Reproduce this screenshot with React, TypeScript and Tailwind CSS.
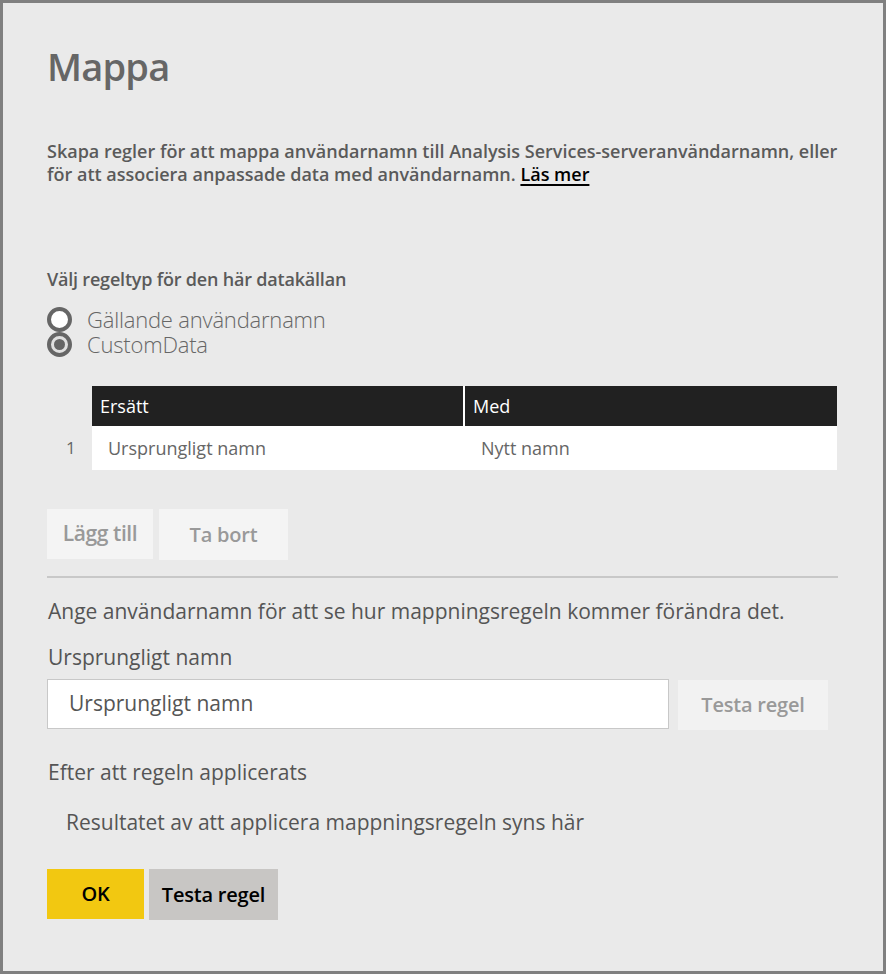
import React from "react";

const font = { fontFamily: '"Open Sans", "Noto Sans", Arial, sans-serif' };

export default function App() {
  return (
    <div
      className="w-[886px] h-[974px] border-[3px] border-[#808080] bg-[#eaeaea] box-border pl-[44px] pr-[45px] pt-[39px] text-[#666]"
      style={font}
    >
      <h1 className="text-[38px] leading-[48px] font-semibold text-[#666] tracking-[-0.8px]">Mappa</h1>

      <p className="mt-[50px] text-[18px] leading-[23px] font-semibold text-[#5a5a5a] -mr-[4px]">
        Skapa regler för att mappa användarnamn till Analysis Services-serveranvändarnamn, eller för att associera anpassade data med användarnamn.{" "}
        <span className="text-black underline underline-offset-[3px] decoration-[2px]">Läs mer</span>
      </p>

      <div className="mt-[81px] text-[18px] leading-[24px] font-semibold text-[#5a5a5a] tracking-[-0.2px]">
        Välj regeltyp för den här datakällan
      </div>

      <div className="mt-[16px] flex flex-col">
        <div className="flex items-center h-[25px]">
          <span className="w-[25px] h-[25px] rounded-full border-[4px] border-[#666] bg-white box-border shrink-0" />
          <span className="ml-[15px] text-[22px] leading-[25px] font-light text-[#666] tracking-[-0.2px]">Gällande användarnamn</span>
        </div>
        <div className="flex items-center h-[25px]">
          <span className="w-[25px] h-[25px] rounded-full border-[4px] border-[#666] bg-[#e0e0e0] box-border shrink-0 flex items-center justify-center">
            <span className="w-[11px] h-[11px] rounded-full bg-[#666]" />
          </span>
          <span className="ml-[15px] text-[22px] leading-[25px] font-light text-[#666] tracking-[-0.2px]">CustomData</span>
        </div>
      </div>

      <div className="mt-[29px] flex flex-col">
        <div className="flex h-[40px]">
          <div className="w-[45px]" />
          <div className="w-[371px] bg-[#212121] text-white text-[18px] flex items-center pl-[8px]">Ersätt</div>
          <div className="w-[2px] bg-white" />
          <div className="w-[372px] bg-[#212121] text-white text-[18px] flex items-center pl-[8px]">Med</div>
        </div>
        <div className="flex h-[44px]">
          <div className="w-[45px] flex items-center pl-[19px] text-[17px] text-[#666]">1</div>
          <div className="w-[745px] bg-white flex items-center text-[18px] text-[#666]">
            <span className="w-[373px] pl-[16px]">Ursprungligt namn</span>
            <span className="pl-[16px]">Nytt namn</span>
          </div>
        </div>
      </div>

      <div className="mt-[39px] flex gap-[6px] items-start">
        <button className="w-[106px] h-[50px] bg-[#f4f4f4] text-[#999] text-[21px] font-semibold tracking-[-0.4px]">Lägg till</button>
        <button className="w-[129px] h-[51px] bg-[#f4f4f4] text-[#999] text-[20px] font-semibold tracking-[-0.2px]">Ta bort</button>
      </div>

      <div className="mt-[16px] h-[2px] w-[791px] bg-[#c8c8c8]" />

      <div className="mt-[20px] text-[21px] leading-[26px] text-[#555] pl-[1px]">
        Ange användarnamn för att se hur mappningsregeln kommer förändra det.
      </div>
      <div className="mt-[20px] text-[21px] leading-[26px] text-[#555] pl-[1px]">
        Ursprungligt namn
      </div>

      <div className="mt-[9px] flex items-start gap-[9px]">
        <div className="w-[622px] h-[50px] bg-white border border-[#c8c8c8] box-border flex items-center pl-[21px] text-[21px] text-[#555]">
          Ursprungligt namn
        </div>
        <button className="mt-[1px] w-[150px] h-[50px] bg-[#f2f2f2] text-[#999] text-[20px] font-semibold tracking-[-0.2px]">Testa regel</button>
      </div>

      <div className="mt-[29px] text-[21px] leading-[26px] text-[#555] pl-[1px]">
        Efter att regeln applicerats
      </div>
      <div className="mt-[24px] text-[21px] leading-[26px] text-[#555] pl-[19px]">
        Resultatet av att applicera mappningsregeln syns här
      </div>

      <div className="mt-[34px] flex gap-[5px]">
        <button className="w-[97px] h-[50px] bg-[#f2c811] text-black text-[20px] font-semibold tracking-[-0.2px]">OK</button>
        <button className="w-[129px] h-[51px] bg-[#c8c6c4] text-black text-[20px] font-semibold tracking-[-0.2px]">Testa regel</button>
      </div>
    </div>
  );
}
